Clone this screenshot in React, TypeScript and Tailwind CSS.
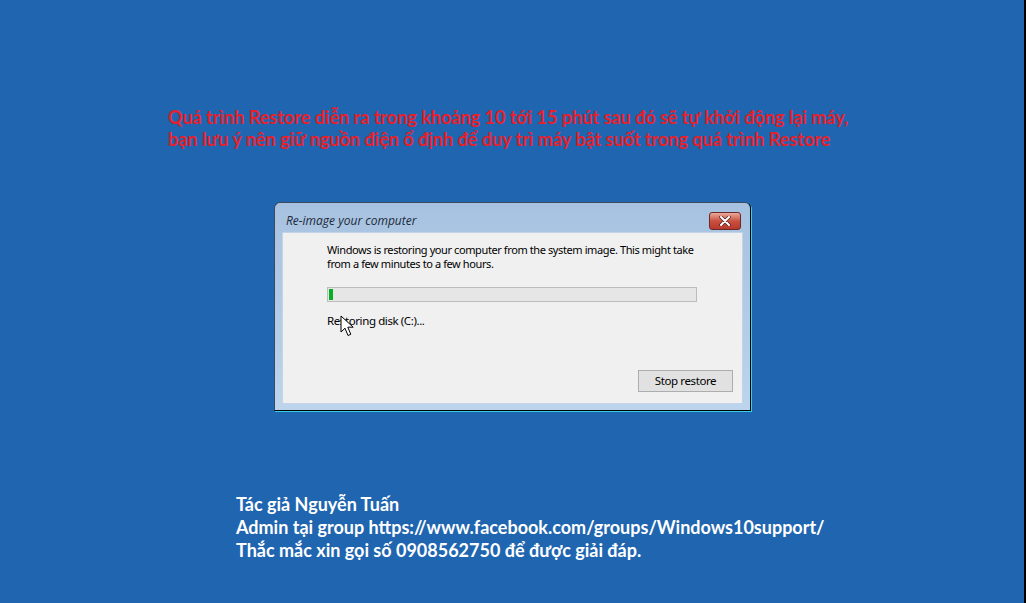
import React from "react";

const RED_LINES = [
  "Quá trình Restore diễn ra trong khoảng 10 tới 15 phút sau đó sẽ tự khởi động lại máy,",
  "bạn lưu ý nên giữ nguồn điện ổ định để duy trì máy bật suốt trong quá trình Restore",
];

const INFO_LINES = [
  "Tác giả Nguyễn Tuấn",
  "Admin tại group https://www.facebook.com/groups/Windows10support/",
  "Thắc mắc xin gọi số 0908562750 để được giải đáp.",
];

const CloseButton = () => (
  <div className="flex h-[18px] w-[32px] items-center justify-center rounded-[3px] border border-[#6b2a2a] bg-gradient-to-b from-[#e9a99c] via-[#c9503f] to-[#b8392b]">
    <svg width="12" height="10" viewBox="0 0 12 10">
      <path d="M2 1 L10 9 M10 1 L2 9" stroke="#4a2020" strokeWidth="3.4" strokeLinecap="round" />
      <path d="M2 1 L10 9 M10 1 L2 9" stroke="#ffffff" strokeWidth="2" strokeLinecap="round" />
    </svg>
  </div>
);

const Cursor = () => (
  <svg className="absolute left-[13px] top-[1px]" width="15" height="22" viewBox="0 0 15 22">
    <path
      d="M1 1 L1 17 L5 13.2 L8 20.5 L10.8 19.3 L7.8 12.2 L13.2 12.2 Z"
      fill="#ffffff"
      stroke="#000000"
      strokeWidth="1"
      strokeLinejoin="round"
    />
  </svg>
);

const ReimageDialog = () => (
  <div className="ml-[274px] mt-[52px] w-[477px] h-[209px] rounded-t-[6px] border border-[#3b4a5c] border-r-black border-b-black shadow-[1px_1px_0_#35d0e8] bg-gradient-to-b from-[#a7c2e0] to-[#bcd4ec] px-[7px] pb-[6px] flex flex-col">
    <div className="flex h-[29px] items-center justify-between pt-[6px] pl-[4px] pr-[2px]">
      <span className="text-[12px] italic text-[#1c2a3a] font-['Open_Sans',sans-serif]">
        Re-image your computer
      </span>
      <CloseButton />
    </div>
    <div className="flex-1 bg-[#f0f0f0] border border-[#c2d4e6] pl-[44px] pr-[9px] pt-[10px] flex flex-col text-[11px] leading-[14px] text-black font-['Noto_Sans',sans-serif] tracking-[-0.4px]">
      <p className="whitespace-nowrap">
        Windows is restoring your computer from the system image. This might take
        <br />
        from a few minutes to a few hours.
      </p>
      <div className="mt-[16px] h-[15px] w-[370px] border border-[#bcbcbc] bg-[#e6e6e6] p-px">
        <div className="h-full w-[4px] bg-[#06b025]" />
      </div>
      <div className="relative mt-[12px] text-[11.5px]">
        <span>Restoring disk (C:)...</span>
        <Cursor />
      </div>
      <div className="mt-auto mb-[11px] flex justify-end">
        <div className="flex h-[22px] w-[95px] items-center justify-center border border-[#adadad] bg-[#e1e1e1] text-[11.5px]">
          Stop restore
        </div>
      </div>
    </div>
  </div>
);

export default function App() {
  return (
    <div className="w-[1026px] h-[603px] overflow-hidden bg-[#1f65b0] border-r-2 border-black flex flex-col">
      <div className="pl-[168px] pt-[106px] text-[18px] leading-[22px] font-bold text-[#e8202a] font-['Lato',sans-serif]">
        {RED_LINES.map((line) => (
          <div key={line}>{line}</div>
        ))}
      </div>

      <ReimageDialog />

      <div className="pl-[236px] mt-[82px] text-[18px] leading-[23px] font-bold text-white font-['Lato',sans-serif]">
        {INFO_LINES.map((line) => (
          <div key={line}>{line}</div>
        ))}
      </div>
    </div>
  );
}
